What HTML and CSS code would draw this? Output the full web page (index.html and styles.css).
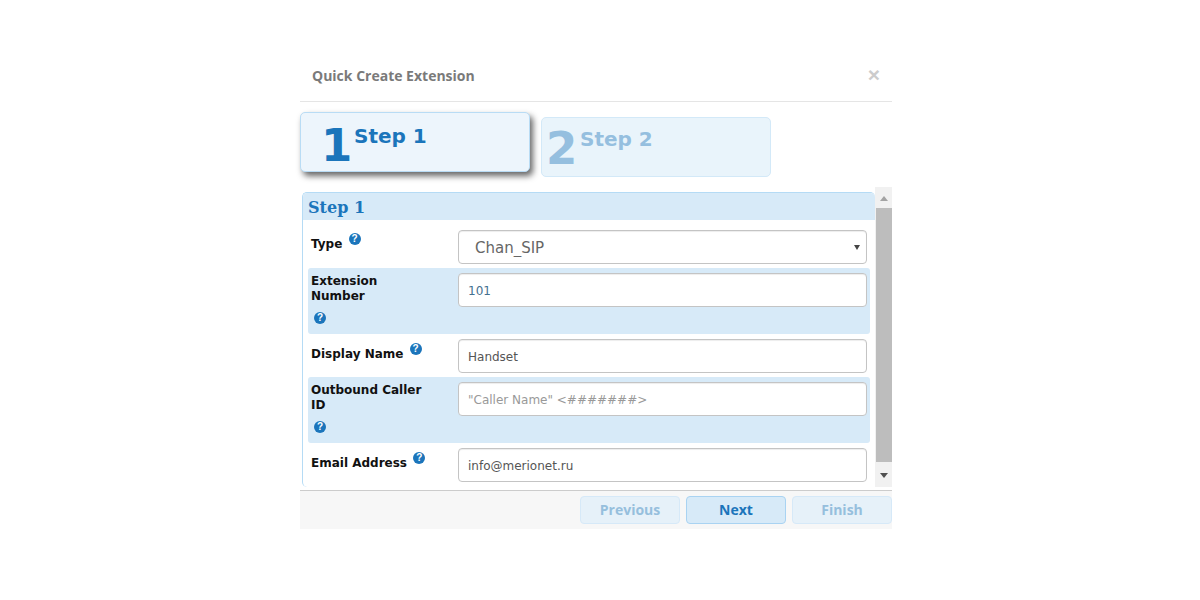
FILE: index.html
```html
<!DOCTYPE html>
<html>
  <head>
    <title>Quick Create Extension</title>
    <link rel="stylesheet" href="styles.css">
  </head>
  <body>
    <div class="modal">
      <div class="modal-head">
        <span class="modal-title">Quick Create Extension</span>
        <span class="close">&times;</span>
      </div>
      <div class="steps">
        <div class="step current"><span class="num">1</span><span class="step-name">Step 1</span></div>
        <div class="step"><span class="num">2</span><span class="step-name">Step 2</span></div>
      </div>
      <div class="content">
        <div class="panel">
          <div class="panel-title">Step 1</div>
          <div class="row">
            <label class="lbl first">Type <span class="help">?</span></label>
            <div class="selectwrap">
              <select class="field pick"><option>Chan_SIP</option></select>
            </div>
          </div>
          <div class="row alt">
            <label class="lbl stacked">Extension Number <span class="help">?</span></label>
            <input class="field number" type="text" value="101">
          </div>
          <div class="row">
            <label class="lbl">Display Name <span class="help">?</span></label>
            <input class="field" type="text" value="Handset">
          </div>
          <div class="row alt">
            <label class="lbl stacked">Outbound Caller ID <span class="help">?</span></label>
            <input class="field" type="text" placeholder="&quot;Caller Name&quot; <#######>">
          </div>
          <div class="row">
            <label class="lbl">Email Address <span class="help">?</span></label>
            <input class="field" type="text" value="info@merionet.ru">
          </div>
        </div>
        <div class="scrollbar">
          <div class="arrow up"></div>
          <div class="thumb"></div>
          <div class="arrow down"></div>
        </div>
      </div>
      <div class="buttons">
        <button class="btn off">Previous</button>
        <button class="btn">Next</button>
        <button class="btn off">Finish</button>
      </div>
    </div>
  </body>
</html>
```

FILE: styles.css
```css
body {
  margin: 0;
  background: #fff;
}

.modal {
  width: 592px;
  margin-left: 300px;
}

.modal-head {
  display: flex;
  justify-content: space-between;
  padding: 66px 12px 15px;
  border-bottom: 1px solid #e5e5e5;
  line-height: 20px;
}
.modal-title {
  font: bold 14px/20px "Open Sans", sans-serif;
  color: #7a7a7a;
}
.close {
  font: bold 21px/18px "Liberation Sans", sans-serif;
  color: #ccc;
}

.steps {
  display: flex;
  align-items: flex-start;
  gap: 11px;
  margin-top: 10px;
}
.step {
  display: flex;
  box-sizing: border-box;
  width: 230px;
  height: 60px;
  margin-top: 5px;
  padding-left: 4px;
  background: #e9f4fb;
  border: 1px solid #d3e9f8;
  border-radius: 5px;
  color: #95bfdf;
  font-family: "DejaVu Sans", sans-serif;
  font-weight: bold;
}
.step.current {
  margin-top: 0;
  padding-left: 20px;
  background: #edf5fc;
  border-color: #b9dcf5;
  color: #1b75bb;
  box-shadow: 3px 4px 6px #666;
}
.num {
  font-size: 45px;
  line-height: 62px;
  width: 34px;
}
.current .num {
  line-height: 66px;
  width: 33px;
}
.step-name {
  font-size: 20px;
  line-height: 24px;
  margin-top: 9px;
}
.current .step-name {
  margin-top: 11px;
}

.content {
  display: flex;
  height: 300px;
  margin-top: 10px;
}
.panel {
  box-sizing: border-box;
  width: 573px;
  height: 295px;
  margin: 5px 0 0 2px;
  border-left: 1px solid #b5dbf5;
  border-top: 1px solid #b5dbf5;
  border-radius: 5px;
  overflow: hidden;
}
.panel-title {
  height: 27px;
  padding-left: 5px;
  margin-bottom: 5px;
  background: #d7eaf8;
  color: #1b75bb;
  font: bold 16px/29px "DejaVu Serif", serif;
}
.row {
  display: flex;
  align-items: flex-start;
  margin: 0 5px;
  padding: 5px 3px 4px;
}
.row.alt {
  background: #d7eaf8;
  border-radius: 3px;
}
.lbl {
  box-sizing: border-box;
  flex: none;
  width: 147px;
  padding: 4px 29px 0 0;
  font: bold 12px/15px "DejaVu Sans", sans-serif;
  color: #111;
}
.lbl.first {
  padding-top: 3px;
}
.lbl.stacked {
  padding: 1px 29px 6px 0;
}
.help {
  display: inline-block;
  box-sizing: border-box;
  width: 12px;
  height: 12px;
  margin-left: 2px;
  vertical-align: 6px;
  background: #1b75bb;
  border-radius: 50%;
  color: #fff;
  font: bold 10px/12px "Liberation Sans", sans-serif;
  text-align: center;
}
.stacked .help {
  display: block;
  margin: 8px 0 0 3px;
}

.field {
  box-sizing: border-box;
  display: block;
  width: 409px;
  height: 34px;
  padding: 2px 9px 0;
  background: #fff;
  border: 1px solid #c4c4c4;
  border-radius: 4px;
  box-shadow: inset 0 1px 1px rgba(0, 0, 0, .075);
  color: #555;
  font: 12px "DejaVu Sans", sans-serif;
  outline: none;
}
.field.number {
  color: #44708f;
}
.field::placeholder {
  color: #999;
  opacity: 1;
}
.selectwrap {
  position: relative;
}
.selectwrap::after {
  content: "";
  position: absolute;
  right: 7px;
  top: 15px;
  border-top: 5px solid #444;
  border-left: 3px solid transparent;
  border-right: 3px solid transparent;
}
.pick {
  appearance: none;
  padding: 2px 0 0 16px;
  font-size: 15px;
  color: #666;
}

.scrollbar {
  display: flex;
  flex-direction: column;
  align-items: flex-end;
  width: 17px;
  background: #f1f1f1;
}
.thumb {
  width: 16px;
  height: 254px;
  background: #bdbdbd;
}
.arrow {
  width: 17px;
  height: 21px;
  position: relative;
}
.arrow::after {
  content: "";
  position: absolute;
  left: 5px;
  border-left: 4.5px solid transparent;
  border-right: 4.5px solid transparent;
}
.arrow.up::after {
  top: 9px;
  border-bottom: 5px solid #a3a3a3;
}
.arrow.down {
  height: 25px;
}
.arrow.down::after {
  top: 11px;
  border-top: 5px solid #505050;
}

.buttons {
  display: flex;
  justify-content: flex-end;
  gap: 6px;
  margin-top: 3px;
  padding: 5px 0;
  background: #f7f7f7;
  border-top: 1px solid #ccc;
}
.btn {
  width: 100px;
  height: 28px;
  padding: 0 0 2px;
  background: #d7eaf8;
  border: 1px solid #a9d3f2;
  border-radius: 4px;
  color: #1b75bb;
  font: bold 14px "Open Sans", sans-serif;
}
.btn.off {
  background: #e6f1f9;
  border-color: #d6e9f8;
  color: #96bfdd;
}
```
